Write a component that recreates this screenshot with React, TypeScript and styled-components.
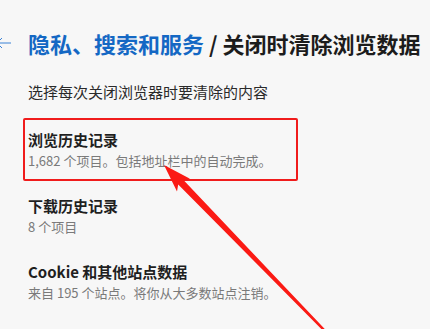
import styled, { createGlobalStyle } from "styled-components";

const GlobalStyle = createGlobalStyle`
  html, body {
    margin: 0;
    padding: 0;
    background: #f7f7f7;
  }
  body {
    font-family: "Noto Sans CJK SC", "Noto Sans", sans-serif;
  }
`;

interface Item {
  title: string;
  desc: string;
  marked?: boolean;
}

const items: Item[] = [
  { title: "浏览历史记录", desc: "1,682 个项目。包括地址栏中的自动完成。", marked: true },
  { title: "下载历史记录", desc: "8 个项目" },
  { title: "Cookie 和其他站点数据", desc: "来自 195 个站点。将你从大多数站点注销。" },
];

const App = () => {
  return (
    <Page>
      <GlobalStyle />
      <Header>
        <BackButton>
          <svg width="12" height="12" viewBox="0 0 12 12" fill="none">
            <path
              d="M-3 6H11M2 1L-3 6L2 11"
              stroke="#3b82d6"
              strokeWidth="1"
            />
          </svg>
        </BackButton>
        <Title>
          <Crumb>隐私、搜索和服务</Crumb>
          <span> / 关闭时清除浏览数据</span>
        </Title>
      </Header>
      <Content>
        <Intro>选择每次关闭浏览器时要清除的内容</Intro>
        <List>
          {items.map((item) => (
            <Row key={item.title}>
              <RowTitle>{item.title}</RowTitle>
              <RowDesc>{item.desc}</RowDesc>
              {item.marked && <Highlight />}
            </Row>
          ))}
        </List>
      </Content>
      <Annotation width="430" height="329" viewBox="0 0 430 329">
        <polygon
          points="164,165 190,178.8 183.2,179.8 325.9,330.2 324.1,331.8 178.2,184.6 177,191.4"
          fill="#fb1a14"
        />
      </Annotation>
    </Page>
  );
};

export default App;

const Page = styled.div`
  position: relative;
  width: 430px;
  height: 329px;
  overflow: hidden;
  background: #f7f7f7;
`;

const Header = styled.div`
  display: flex;
  align-items: center;
  padding-top: 28px;
  height: 30px;
`;

const BackButton = styled.div`
  display: flex;
  align-items: center;
  width: 28px;
  height: 30px;
  svg {
    display: block;
  }
`;

const Title = styled.h1`
  margin: 0;
  font-size: 22px;
  line-height: 30px;
  font-weight: 700;
  color: #1c1c1c;
  white-space: nowrap;
`;

const Crumb = styled.span`
  color: #1468c4;
`;

const Content = styled.div`
  padding: 23px 0 0 28px;
`;

const Intro = styled.p`
  margin: 0;
  font-size: 15px;
  line-height: 22px;
  color: #2a2a2a;
`;

const List = styled.div`
  display: flex;
  flex-direction: column;
  gap: 24px;
  margin-top: 26px;
`;

const Row = styled.div`
  position: relative;
  display: flex;
  flex-direction: column;
`;

const RowTitle = styled.div`
  font-size: 15px;
  line-height: 22px;
  font-weight: 700;
  color: #1f1f1f;
`;

const RowDesc = styled.div`
  font-size: 13px;
  line-height: 20px;
  color: #7a7a7a;
`;

const Highlight = styled.div`
  position: absolute;
  left: -5px;
  top: -11px;
  width: 275px;
  height: 63px;
  box-sizing: border-box;
  border: 2px solid #f01c1c;
  border-radius: 2px;
`;

const Annotation = styled.svg`
  position: absolute;
  left: 0;
  top: 0;
  pointer-events: none;
`;
